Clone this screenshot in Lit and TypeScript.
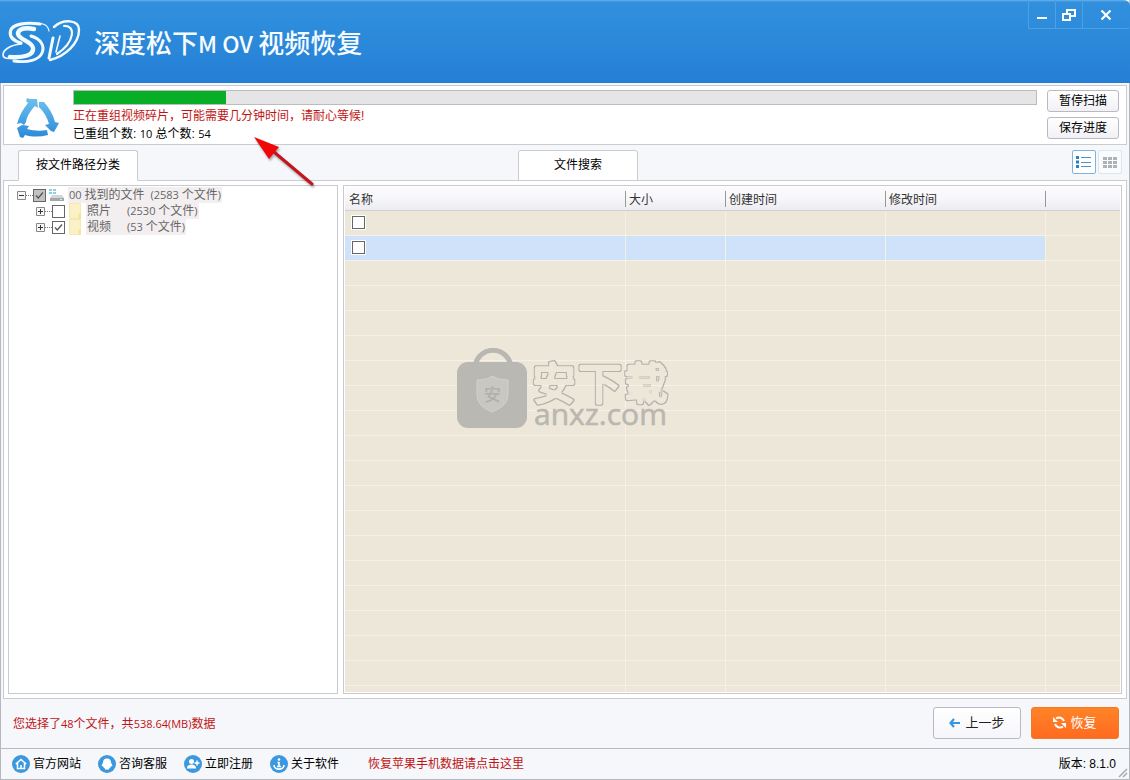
import { LitElement, html, css, svg } from "lit";
import { customElement, state } from "lit/decorators.js";

interface TreeNode { prefix?: string; name: string; count: string; level: number; open: boolean; checked: boolean; mixed?: boolean; root?: boolean; }

const logo = svg`
  <g fill="none" stroke="#f2fbff" stroke-linecap="round">
    <path d="M34 13C24 11 18 13 18 18C19 24 32 25 33 32C34 39 24 42 10 41" stroke-width="4.400"/>
    <path d="M40 8C26 6 12 8 10.500 15C9 22 14 25 21 27" stroke-width="3.200"/>
    <path d="M21 28C10 29 3 34 3 39C3 42 7 43 12 42" stroke-width="1.600"/>
    <path d="M31 20C41 23 45 30 42 37C39 44 28 47 14 45" stroke-width="3"/>
    <path d="M34 7C44 7 48 9 49 15" stroke-width="1.200"/>
    <path d="M54 11C63 3 79 3 79 14C79 27 66 40 50 44" stroke-width="2.400"/>
    <path d="M53 22 49 42" stroke-width="3"/>
    <path d="M60 20 56 36" stroke-width="1.600"/>
    <path d="M64 10C76 9 75 26 57 38" stroke-width="2.200"/>
  </g>`;

@customElement("app-root")
export class AppRoot extends LitElement {
  static styles = css`
    :host { display: block; min-height: 100vh; font: 12px/16px "Liberation Sans", "Noto Sans CJK SC", sans-serif; color: #000; }
    * { box-sizing: border-box; }
    button, input { font: inherit; margin: 0; }
    svg { display: block; }
    .window { position: relative; display: flex; flex-direction: column; min-height: 100vh; background: #f5f7fb; border: 1px solid #b6b8c0; border-top: 0; }
    header { display: flex; justify-content: space-between; align-items: flex-start; height: 83px; margin: 0 -1px; background: linear-gradient(#68b4ea 0, #318fdd 2px, #2e8ddc 20px, #2580d6 80px, #237dd4); border-radius: 0 6px 0 0; }
    .brand { display: flex; align-items: center; gap: 11px; height: 84px; }
    h1 { margin: 0; font: 500 26px/36px "Noto Sans CJK SC", sans-serif; color: #f6fcff; white-space: pre; }
    .latin { font-size: 23px; }
    .controls { display: flex; height: 29px; margin-right: 1px; border: 1px solid #4fa0e3; border-width: 0 0 1px 1px; }
    .controls button { display: grid; place-items: center; width: 27px; padding: 2px 0 0; border: 0; border-right: 1px solid #4fa0e3; background: none; }
    .controls button:last-child { width: 46px; border: 0; }
    .status { display: flex; align-items: flex-start; margin: 2px 2px 0; padding: 4px 7px 4px 12px; height: 60px; background: #fff; border: 1px solid #c9cbd1; }
    .recycle { margin: 5px 13px 0 0; }
    .progress { flex: 1; }
    .bar { height: 15px; margin-bottom: 2px; border: 1px solid #bcbcbc; background: #e5e4e6; }
    .fill { height: 100%; background: #08ae26; }
    p { margin: 0; line-height: 18px; }
    .num { font-family: "Open Sans", sans-serif; font-size: 11px; line-height: 1; }
    .red { color: #c01414; }
    .side { display: flex; flex-direction: column; gap: 5px; margin-left: 10px; }
    .side button { width: 72px; height: 22px; padding: 0; border: 1px solid #b9b9c3; border-radius: 3px; background: linear-gradient(#fff, #f1f0f5); }
    .tabs { position: relative; display: flex; height: 36px; padding: 5px 7px 0 17px; align-items: flex-start; }
    .tab { width: 120px; height: 31px; padding: 0 0 2px; border: 1px solid #c9cbd1; border-bottom-color: #fff; border-radius: 3px 3px 0 0; background: #fff; }
    .tab.second { margin-left: 380px; border-bottom-color: #c9cbd1; }
    .views { display: flex; gap: 2px; margin-left: auto; }
    .views button { display: grid; place-items: center; width: 24px; height: 24px; padding: 0; background: #fafbfd; border: 1px solid #dfe5ec; border-radius: 2px; }
    .views .on { background: #fff; border-color: #7eb5dd; }
    main { flex: 1; display: flex; gap: 5px; margin: -1px 2px 0; padding: 4px; background: #fff; border: 1px solid #c9cbd1; }
    .tree { width: 330px; margin: 0; padding: 1px 8px; list-style: none; border: 1px solid #c9cbd1; color: #666; font-family: "Open Sans", "Noto Sans CJK SC", sans-serif; }
    .node { display: flex; align-items: center; height: 16px; }
    .child { padding-left: 19px; }
    .dots { width: 7px; border-top: 1px dotted #777; }
    .expander { width: 9px; height: 9px; padding: 0; border: 0; background: none; }
    .box { appearance: none; width: 13px; height: 13px; border: 1px solid #666; background: #fff; }
    .box:checked { background: #fff url("data:image/svg+xml,%3Csvg xmlns='http://www.w3.org/2000/svg' viewBox='0 0 11 11'%3E%3Cpath d='M2 5.5l2.3 2.5L9 2.5' fill='none' stroke='%23555' stroke-width='1.3'/%3E%3C/svg%3E"); }
    .mixed.box:checked { background-color: #c2c2c2; }
    .glyph { margin: 0 4px 0 3px; opacity: .8; }
    .label { display: flex; gap: 6px; padding: 0 1px; line-height: 16px; background: #f3eff1; white-space: pre; }
    .child .label { gap: 16px; }
    .list { position: relative; flex: 1; padding: 1px; border: 1px solid #c9cbd1; }
    table { width: 100%; height: 100%; table-layout: fixed; border-collapse: separate; border-spacing: 0; background: #ede7da; }
    .name { width: 281px; } .size { width: 100px; } .date { width: 160px; }
    th { height: 24px; padding: 2px 2px 0 3px; text-align: left; font-weight: 400; color: #333; background: linear-gradient(90deg, #999, #999) right 4px / 1px 16px no-repeat, linear-gradient(#fcfafc, #f8f7fa 45%, #ececf1); border-bottom: 1px solid #cfcfd4; }
    th:first-child { padding-left: 4px; }
    th:last-child { background: linear-gradient(#fcfafc, #f8f7fa 45%, #ececf1); }
    td { height: 25px; padding: 0 0 2px 7px; border: 0 solid #f5f1e9; border-width: 0 1px 1px 0; }
    td:last-child { border-right: 0; }
    td .box { display: block; outline: 1px solid #fff; }
    .picked td:not(:last-child) { background: #d0e1fa; }
    .rest td { height: auto; border-bottom: 0; }
    .watermark { position: absolute; left: 113px; top: 162px; pointer-events: none; }
    .arrow { position: absolute; left: 244px; top: 128px; pointer-events: none; filter: drop-shadow(1px 2px 1px #0005); }
    .actions { display: flex; align-items: center; height: 50px; padding: 0 10px 2px 12px; border-bottom: 1px solid #b9bac2; }
    .actions .red { margin-right: auto; padding-top: 3px; }
    .actions button { display: flex; align-items: center; justify-content: center; gap: 5px; width: 88px; height: 32px; margin-left: 10px; padding: 0; border: 1px solid #b9b9c3; border-radius: 3px; background: linear-gradient(#fff, #f6f5fa); font-size: 13px; color: #222; }
    .actions .go { border-color: #f27a25; background: linear-gradient(#ff8426, #ff6a20); color: #fff; gap: 4px; }
    footer { display: flex; align-items: center; height: 30px; padding: 0 13px 0 11px; }
    a { display: flex; align-items: center; gap: 3px; margin-right: 17px; color: #000; text-decoration: none; }
    a.red { margin-left: 12px; color: #c01414; }
    .version { margin-left: auto; }
    .grip { position: absolute; right: 1px; bottom: 1px; }
  `;

  @state() private view = "list";
  private progress = 15.8;
  private nodes: TreeNode[] = [
    { prefix: "00 ", name: "找到的文件", count: "(2583 ", level: 0, open: true, checked: true, mixed: true, root: true },
    { name: "照片", count: "(2530 ", level: 1, open: false, checked: false },
    { name: "视频", count: "(53 ", level: 1, open: false, checked: true },
  ];
  private rows = Array.from({ length: 19 }, (_, i) => i);

  private nodeIcon(n: TreeNode) {
    return n.root
      ? html`<svg class="glyph" width="15" height="14" viewBox="0 0 15 14"><path d="M0 1h3v2H0zM4 1h3v2H4zM0 4h3v2H0zM4 4h3v2H4z" fill="#6cc5dd"/><path d="M3 7h10l2 3H1z" fill="#c9ccd0"/><path d="M1 10h14v3H1z" fill="#8d9298"/><path d="M11 11h2v1h-2z" fill="#d9f3c9"/></svg>`
      : html`<svg class="glyph" width="14" height="16" viewBox="0 0 14 16"><path d="M1.500.5h11v15h-11z" fill="#fbeeb8" stroke="#f3e0a0"/><path d="M11 10l2 1v5h-3z" fill="#f5db86"/></svg>`;
  }

  private linkIcon(kind: number) {
    const shapes = [
      svg`<path d="M3.800 9 9 4.500l5.200 4.500M5.500 8v5.500h7V8M9 13.500V10" fill="none" stroke="#fff" stroke-width="1.500"/>`,
      svg`<path d="M9 3.500c-3 0-4 2-4 4l-1.500 3.500 1.500.2c.5 1.500 1.200 2 2 2.300v1h4v-1c.8-.3 1.500-.8 2-2.300l1.500-.2L13 7.500c0-2-1-4-4-4z" fill="#fff"/>`,
      svg`<circle cx="7.500" cy="6.500" r="2.500" fill="#fff"/><path d="M2.800 13.500c.4-3 2-4 4.700-4s4.300 1 4.700 4z" fill="#fff"/><path d="M13 5.500v5M10.500 8h5" stroke="#fff" stroke-width="1.500"/>`,
      svg`<path d="M9 7v4.500M7.500 7.500H9M7 11.500h4M4 10C4 15.500 14 15.500 14 10" fill="none" stroke="#fff" stroke-width="1.600"/><circle cx="9" cy="4.500" r="1.300" fill="#fff"/>`,
    ];
    return html`<svg width="18" height="18" viewBox="0 0 18 18"><circle cx="9" cy="9" r="9" fill="#3c98de"/>${shapes[kind]}</svg>`;
  }

  render() {
    return html`<div class="window">
      <header>
        <div class="brand">
          <svg width="83" height="52" viewBox="0 0 83 52">${logo}</svg>
          <h1>深度松下<span class="latin">M OV </span>视频恢复</h1>
        </div>
        <div class="controls">
          <button aria-label="最小化"><svg width="12" height="12" viewBox="0 0 12 12"><path d="M1 9h10" stroke="#fff" stroke-width="2"/></svg></button>
          <button aria-label="还原"><svg width="14" height="12" viewBox="0 0 14 12"><path d="M5 4V1h8v6H9M1 5h7v6H1z" fill="none" stroke="#fff" stroke-width="2"/></svg></button>
          <button aria-label="关闭"><svg width="12" height="12" viewBox="0 0 12 12"><path d="M1.500 1.500l9 9M10.500 1.500l-9 9" stroke="#fff" stroke-width="2.200"/></svg></button>
        </div>
      </header>

      <section class="status">
        <svg class="recycle" width="44" height="44" viewBox="0 0 44 44">
          <defs><linearGradient id="blue" gradientUnits="userSpaceOnUse" x1="0" y1="3" x2="0" y2="43"><stop offset="0" stop-color="#6cc2ee"/><stop offset="1" stop-color="#2a89d8"/></linearGradient></defs>
          <g fill="url(#blue)">
            <path d="M1 29C3 21 7 14 12 8L10 6 11 3 14 4 21 4 22 13 19 11C15 15 11 21 10 27L8 30 5 28Z"/>
            <path d="M23 7 28 7C33 13 37 19 39 27L43 28 38 37 35 36 29 30 33 29C31 22 28 17 23 12Z"/>
            <path d="M1 33 6 30 13 31 11 34C18 36 25 36 31 35L32 40C24 42 16 42 9 40L7 43 4 42Z"/>
          </g>
        </svg>
        <div class="progress">
          <div class="bar" role="progressbar" aria-valuenow=${this.progress}><div class="fill" style="width:${this.progress}%"></div></div>
          <p class="red">正在重组视频碎片，可能需要几分钟时间，请耐心等候!</p>
          <p>已重组个数: <span class="num">10</span> 总个数: <span class="num">54</span></p>
        </div>
        <div class="side"><button>暂停扫描</button><button>保存进度</button></div>
      </section>

      <nav class="tabs">
        <button class="tab">按文件路径分类</button>
        <button class="tab second">文件搜索</button>
        <div class="views">
          <button class=${this.view === "list" ? "on" : ""} aria-label="列表" @click=${() => (this.view = "list")}><svg width="16" height="12" viewBox="0 0 16 12"><path d="M0 0h3v3H0zM0 4.500h3v3H0zM0 9h3v3H0z" fill="#2e7fc0"/><path d="M5 1.500h10M5 6.500h10M5 10.500h10" stroke="#4a96cb"/></svg></button>
          <button class=${this.view === "grid" ? "on" : ""} aria-label="网格" @click=${() => (this.view = "grid")}><svg width="14" height="11" viewBox="0 0 14 11"><path d="M0 0h4v3H0zM5 0h4v3H5zM10 0h4v3h-4zM0 4h4v3H0zM5 4h4v3H5zM10 4h4v3h-4zM0 8h4v3H0zM5 8h4v3H5zM10 8h4v3h-4z" fill="#aeb2b6"/></svg></button>
        </div>
      </nav>

      <main>
        <ul class="tree">
          ${this.nodes.map((n) => html`<li class="node ${n.level ? "child" : ""}">
            <button class="expander" aria-label="展开"><svg width="9" height="9" viewBox="0 0 9 9"><path d="M.5.5h8v8h-8z" fill="#f6f6f6" stroke="#888"/><path d=${n.open ? "M2 4.500h5" : "M2 4.500h5M4.500 2v5"} stroke="#334"/></svg></button>
            <span class="dots"></span>
            <input class="box ${n.mixed ? "mixed" : ""}" type="checkbox" .checked=${n.checked} aria-label=${n.name}>
            ${this.nodeIcon(n)}
            <span class="label"><span>${n.prefix ? html`<span class="num">${n.prefix}</span>` : ""}${n.name}</span><span><span class="num">${n.count}</span>个文件<span class="num">)</span></span></span>
          </li>`)}
        </ul>
        <div class="list">
          <table>
            <thead><tr><th class="name">名称</th><th class="size">大小</th><th class="date">创建时间</th><th class="date">修改时间</th><th></th></tr></thead>
            <tbody>
              ${this.rows.map((i) => html`<tr class=${i === 1 ? "picked" : ""}><td>${i < 2 ? html`<input class="box" type="checkbox" aria-label="选择文件">` : ""}</td><td></td><td></td><td></td><td></td></tr>`)}
              <tr class="rest"><td></td><td></td><td></td><td></td><td></td></tr>
            </tbody>
          </table>
          <svg class="watermark" width="220" height="96" viewBox="0 0 220 96">
            <defs>
              <filter id="hollow" x="-5%" y="-5%" width="110%" height="110%" color-interpolation-filters="sRGB">
                <feMorphology in="SourceAlpha" operator="erode" radius="1" result="inner"/>
                <feComposite in="SourceGraphic" in2="inner" operator="out" result="edge"/>
              </filter>
            </defs>
            <path d="M18 18C22-3 50-3 54 18" fill="none" stroke="#b9b7b1" stroke-width="5"/>
            <rect y="14" width="70" height="66" rx="11" fill="#bab8b2"/>
            <path d="M20 32Q30 32 35 28Q41 32 51 32V47Q51 58 35 64Q20 58 20 47Z" fill="#c9c7c2" stroke="#d3d1cb"/>
            <text x="27" y="53" font-family="Noto Sans CJK SC" font-weight="500" font-size="17" fill="#b2b0aa">安</text>
            <text x="75 121 167" y="52" font-family="Noto Sans CJK SC" font-weight="500" font-size="44" fill="#b3b1aa" stroke="#b3b1aa" stroke-width="4" stroke-linejoin="round" filter="url(#hollow)">安下载</text>
            <text x="77" y="77" font-family="Open Sans" font-size="30" fill="#b9b7b0" stroke="#b9b7b0" stroke-width=".6">anxz.com</text>
          </svg>
        </div>
      </main>

      <div class="actions">
        <span class="red">您选择了<span class="num">48</span>个文件，共<span class="num">538.64(MB)</span>数据</span>
        <button><svg width="11" height="10" viewBox="0 0 11 10"><path d="M5 1 1.500 5 5 9M1.500 5H11" fill="none" stroke="#3796dd" stroke-width="2.200"/></svg>上一步</button>
        <button class="go"><svg width="13" height="13" viewBox="0 0 13 13"><path d="M3 2.500C6 .5 9.500 1.500 11 5M10 10.500C7 12.500 3.500 11.500 2 8" fill="none" stroke="#fff" stroke-width="2"/><path d="M0 1v5h5zM13 12V7H8z" fill="#fff"/></svg>恢复</button>
      </div>

      <footer>
        ${["官方网站", "咨询客服", "立即注册", "关于软件"].map((t, i) => html`<a href="#">${this.linkIcon(i)}${t}</a>`)}
        <a class="red" href="#">恢复苹果手机数据请点击这里</a>
        <span class="version">版本: 8.1.0</span>
        <svg class="grip" width="10" height="10" viewBox="0 0 10 10"><path d="M1 9 9 1M5 9l4-4" stroke="#aaa" stroke-width="1.500"/></svg>
      </footer>

      <svg class="arrow" width="75" height="62" viewBox="0 0 75 62"><path d="M29 24 67 56" stroke="#c4141c" stroke-width="3" stroke-linecap="round"/><path d="M9 9 34 19 24 31Z" fill="#f00808"/></svg>
    </div>`;
  }
}
